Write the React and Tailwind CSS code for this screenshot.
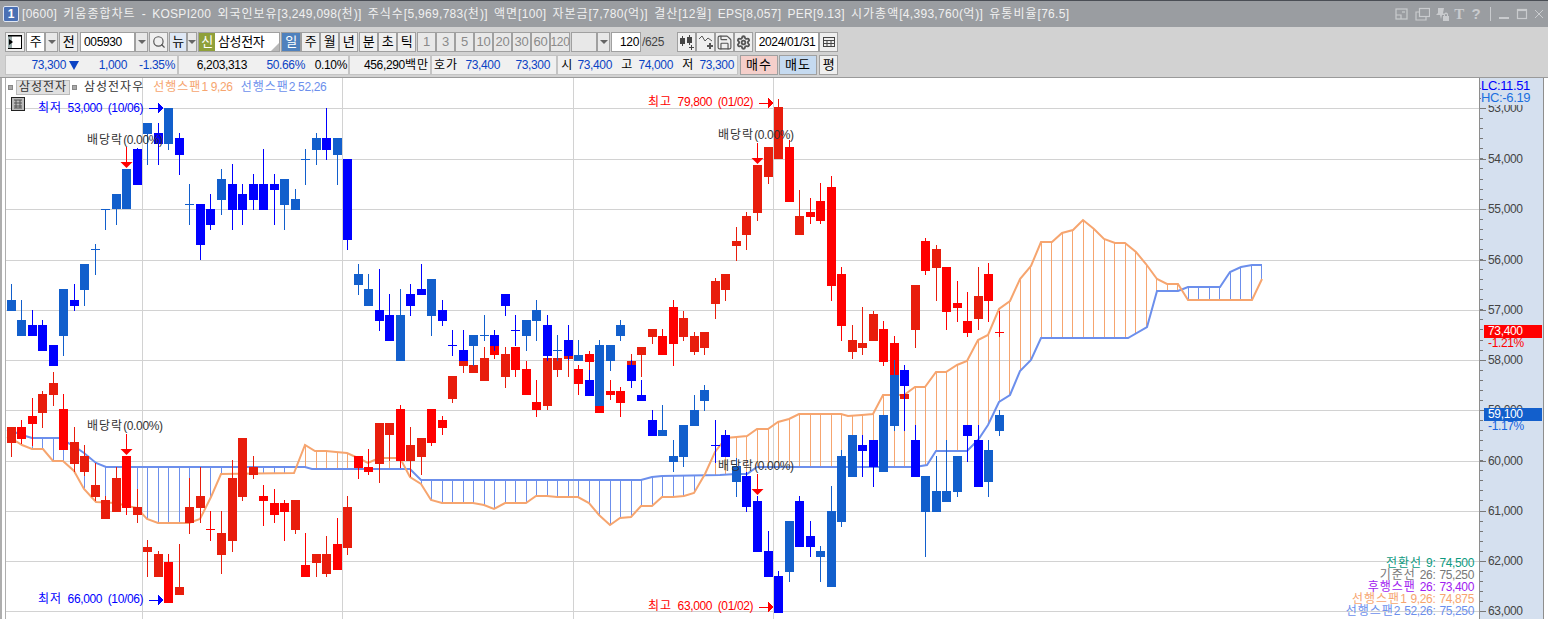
import { Save, Search, Settings } from "lucide-react";

const R1 = "#e81d0c";
const R2 = "#ff0000";
const B1 = "#125fcc";
const B2 = "#0000ff";
const ORANGE = "#f6a56f";
const SKY = "#6c8fec";

// [wick top, body top, body bottom, wick bottom, colour]
const blue = [
  [284, 300, 311, 311, B1], [300, 320, 336, 336, B1], [310, 325, 336, 336, B2], [320, 325, 351, 351, B2],
  [345, 345, 366, 366, B2], [289, 289, 336, 356, B1], [284, 300, 306, 311, B2], [264, 264, 290, 306, B1],
  [244, 249, 250, 275, B1], [209, 209, 210, 230, B1], [194, 194, 209, 225, B1], [169, 169, 209, 209, B1],
  [148, 149, 185, 185, B2], [123, 123, 134, 165, B1], [123, 133, 144, 165, B2], [108, 108, 144, 150, B1],
  [133, 138, 155, 175, B2], [184, 204, 205, 225, B1], [204, 204, 245, 260, B2], [194, 209, 225, 230, B2],
  [169, 179, 200, 215, B1], [164, 184, 210, 230, B2], [184, 194, 210, 225, B2], [174, 184, 200, 210, B2],
  [149, 184, 210, 210, B2], [174, 184, 190, 225, B2], [179, 179, 205, 230, B1], [189, 199, 210, 210, B1],
  [149, 159, 160, 185, B1], [133, 138, 150, 165, B1], [108, 138, 150, 160, B2], [138, 138, 155, 185, B1],
  [159, 159, 240, 250, B2], [264, 274, 285, 295, B1], [274, 289, 306, 306, B1], [269, 310, 321, 331, B2],
  [294, 315, 341, 341, B2], [289, 315, 361, 361, B1], [284, 294, 306, 316, B2], [264, 289, 295, 295, B2],
  [279, 279, 316, 336, B1], [300, 310, 321, 326, B2], [330, 345, 346, 356, B2], [330, 350, 361, 361, B2],
  [335, 335, 346, 366, B1], [315, 335, 336, 341, B1], [330, 335, 346, 351, B2], [294, 294, 306, 316, B2],
  [315, 330, 331, 346, B2], [320, 320, 336, 351, B1], [300, 310, 321, 341, B1], [315, 325, 356, 361, B2],
  [335, 350, 351, 361, B1], [325, 340, 356, 360, B2], [340, 355, 361, 361, B1], [370, 380, 396, 396, B2],
  [340, 345, 406, 406, B1], [345, 345, 361, 371, B1], [320, 325, 336, 341, B1], [360, 365, 381, 388, B2],
  [380, 395, 401, 401, B2], [410, 420, 436, 436, B2], [405, 430, 436, 436, B1], [440, 456, 462, 472, B1],
  [425, 425, 457, 467, B1], [395, 410, 426, 426, B1], [385, 390, 401, 411, B1], [420, 445, 446, 463, B2],
  [430, 435, 457, 457, B2], [458, 466, 482, 497, B1], [472, 476, 507, 512, B2], [496, 501, 552, 552, B2],
  [531, 551, 577, 577, B2], [571, 576, 613, 613, B2], [521, 521, 572, 582, B1], [496, 501, 547, 547, B2],
  [521, 536, 547, 557, B2], [546, 551, 557, 582, B1], [486, 511, 587, 587, B1], [450, 456, 522, 527, B1],
  [435, 435, 477, 477, B1], [435, 445, 451, 477, B2], [440, 440, 467, 487, B2], [415, 415, 472, 472, B1],
  [360, 375, 426, 431, B1], [365, 370, 386, 431, B2], [425, 440, 477, 477, B2], [476, 476, 512, 557, B1],
  [456, 491, 512, 512, B1], [440, 491, 502, 502, B1], [456, 456, 492, 497, B1], [425, 425, 436, 462, B2],
  [425, 440, 487, 487, B2], [440, 450, 482, 497, B1], [410, 415, 431, 436, B1],
];

const red = [
  [427, 427, 443, 457, R1], [420, 427, 439, 444, R2], [398, 416, 424, 446, R2], [391, 394, 413, 428, R1],
  [372, 383, 395, 406, R1], [394, 409, 450, 450, R2], [427, 442, 464, 472, R1], [445, 456, 472, 476, R1],
  [463, 485, 497, 501, R1], [496, 500, 519, 519, R1], [467, 478, 512, 512, R1], [456, 456, 508, 515, R2],
  [489, 507, 515, 523, R1], [540, 547, 552, 577, R1], [551, 554, 577, 577, R1], [554, 562, 603, 603, R2],
  [544, 587, 595, 595, R1], [478, 507, 523, 534, R1], [467, 496, 508, 523, R1], [511, 529, 530, 541, R2],
  [511, 533, 555, 574, R1], [460, 478, 541, 552, R1], [438, 438, 497, 501, R1], [456, 467, 475, 479, R1],
  [485, 496, 501, 526, R2], [489, 503, 515, 523, R2], [500, 503, 512, 541, R2], [500, 500, 530, 534, R1],
  [533, 565, 577, 577, R2], [554, 554, 563, 577, R1], [536, 554, 574, 577, R1], [518, 544, 570, 570, R2],
  [496, 507, 548, 555, R1], [456, 456, 468, 479, R2], [449, 467, 472, 475, R2], [423, 423, 464, 483, R1],
  [423, 423, 435, 461, R1], [405, 409, 461, 468, R2], [427, 445, 461, 477, R1], [438, 438, 457, 475, R1],
  [409, 409, 443, 446, R2], [416, 420, 428, 435, R2], [376, 376, 399, 403, R1], [361, 361, 366, 373, R1],
  [365, 365, 373, 373, R1], [347, 358, 381, 381, R1], [346, 346, 355, 359, R2], [347, 354, 377, 388, R1],
  [347, 347, 370, 377, R2], [361, 369, 395, 395, R2], [380, 402, 410, 417, R2], [358, 358, 406, 410, R1],
  [358, 358, 370, 377, R1], [356, 356, 359, 377, R1], [365, 369, 384, 395, R2], [351, 354, 362, 370, R2],
  [406, 406, 413, 413, R2], [380, 391, 395, 400, R2], [387, 391, 403, 417, R2], [354, 361, 365, 365, R1],
  [347, 347, 355, 377, R1], [329, 329, 337, 344, R1], [329, 336, 355, 355, R2], [300, 307, 344, 366, R2],
  [311, 318, 337, 341, R1], [332, 336, 352, 355, R1], [332, 332, 348, 355, R1], [278, 281, 304, 319, R1],
  [274, 274, 290, 301, R1], [227, 241, 246, 261, R1], [212, 216, 235, 250, R1], [165, 165, 213, 221, R1],
  [147, 147, 177, 184, R1], [99, 107, 159, 159, R1], [140, 147, 202, 202, R2], [190, 216, 235, 235, R1],
  [198, 212, 217, 224, R2], [183, 201, 221, 224, R2], [176, 187, 286, 301, R2], [267, 274, 326, 341, R2],
  [325, 340, 352, 359, R1], [307, 343, 348, 355, R1], [311, 314, 341, 341, R1], [321, 329, 362, 366, R2],
  [336, 343, 375, 375, R2], [394, 394, 399, 431, R1], [285, 285, 330, 348, R1], [238, 241, 271, 275, R2],
  [245, 249, 268, 301, R1], [267, 267, 312, 330, R2], [281, 303, 308, 322, R2], [292, 321, 333, 337, R2],
  [267, 296, 319, 330, R1], [263, 274, 301, 322, R2], [311, 332, 333, 337, R2],
];

const spanA = [
  [7, 437], [17, 442], [22, 445], [32, 449], [43, 449], [53, 461], [63, 461], [74, 471], [84, 489], [96, 502], [116, 503],
  [127, 506], [137, 508], [147, 519], [158, 523], [189, 523], [200, 519], [211, 497], [221, 474], [294, 473], [305, 445],
  [315, 451], [326, 451], [336, 452], [347, 453], [358, 458], [368, 463], [379, 458], [400, 458], [410, 477], [421, 484],
  [431, 500], [442, 503], [473, 503], [484, 505], [494, 509], [505, 503], [526, 503], [536, 496], [547, 496], [557, 497],
  [578, 497], [589, 503], [599, 515], [610, 525], [620, 518], [631, 517], [641, 506], [652, 506], [662, 497], [673, 497],
  [684, 496], [694, 493], [705, 474], [715, 452], [726, 438], [747, 436], [757, 429], [768, 429], [778, 422], [789, 419],
  [799, 414], [841, 414], [848, 416], [862, 415], [873, 414], [883, 395], [904, 395], [915, 387], [925, 387], [936, 372],
  [946, 372], [957, 365], [967, 361], [978, 340], [988, 335], [999, 309], [1010, 301], [1020, 279], [1031, 266], [1041, 242],
  [1052, 242], [1062, 233], [1073, 230], [1083, 220], [1094, 229], [1104, 239], [1115, 243], [1125, 243], [1136, 252],
  [1146, 264], [1157, 279], [1167, 284], [1178, 284], [1188, 300], [1252, 300], [1262, 279],
];

const spanB = [
  [7, 430], [17, 433], [22, 435], [32, 438], [63, 438], [68, 443], [74, 446], [84, 453], [96, 463], [106, 467], [305, 467],
  [312, 469], [410, 469], [421, 480], [641, 480], [652, 477], [662, 476], [720, 475], [736, 474], [747, 474], [757, 467],
  [915, 467], [927, 465], [936, 451], [967, 451], [978, 440], [988, 425], [999, 402], [1010, 395], [1020, 371], [1031, 360],
  [1041, 338], [1128, 338], [1147, 327], [1157, 291], [1178, 291], [1188, 287], [1220, 287], [1230, 272], [1241, 267],
  [1252, 265], [1262, 265],
];

const gridY = [108, 159, 209, 260, 310, 360, 410, 461, 511, 561, 611];
const gridX = [142, 342, 573, 773];
const prices = ["53,000", "54,000", "55,000", "56,000", "57,000", "58,000", "59,000", "60,000", "61,000", "62,000", "63,000"];

const xAt = (i) => Math.floor(11.3 + 10.51 * i);
const pts = (line) => line.map((p) => p.join(",")).join(" ");

// hangul runs sit 1px wider than the font gives, like the terminal's bitmap font
function K({ children }) {
  return children.split(/([가-힣]+)/).map((part, i) =>
    i % 2 ? (
      <span key={i} className="tracking-[1px]">{part}</span>
    ) : (
      part
    )
  );
}

function interp(line, x) {
  for (let k = 0; k < line.length - 1; k++) {
    const [x0, y0] = line[k];
    const [x1, y1] = line[k + 1];
    if (x >= x0 && x <= x1) return y0 + ((y1 - y0) * (x - x0)) / (x1 - x0);
  }
  return null;
}

function Hatch() {
  const lines = [];
  for (let i = 0; i < 120; i++) {
    const x = xAt(i);
    const a = interp(spanA, x);
    const b = interp(spanB, x);
    if (a == null || b == null) continue;
    lines.push(<rect key={i} x={x} y={Math.min(a, b)} width="1" height={Math.abs(a - b)} fill={a < b ? ORANGE : SKY} />);
  }
  return <g shapeRendering="crispEdges">{lines}</g>;
}

function Candles({ data }) {
  return (
    <g shapeRendering="crispEdges">
      {data.map(([top, bt, bb, bot, c], i) => (
        <g key={i} fill={c}>
          <rect x={xAt(i)} y={top} width="1" height={bot - top} />
          <rect x={xAt(i) - 4} y={bt} width="9" height={bb - bt} />
        </g>
      ))}
    </g>
  );
}

function ChartText({ x, y, fill = "#333", children }) {
  return (
    <text x={x} y={y} fill={fill} fontSize="12" dominantBaseline="central">
      {children.split(/([가-힣]+)/).map((part, i) =>
        i % 2 ? (
          <tspan key={i} letterSpacing="1">{part}</tspan>
        ) : (
          part
        )
      )}
    </text>
  );
}

function ArrowRight({ x, y, fill }) {
  return (
    <g fill={fill} shapeRendering="crispEdges">
      <rect x={x} y={y - 0.5} width="10" height="1" />
      <polygon points={`${x + 9},${y - 5} ${x + 15},${y} ${x + 9},${y + 5}`} />
    </g>
  );
}

function ArrowDown({ x, y }) {
  return (
    <g fill={R2}>
      <rect x={x} y={y} width="1" height="15" shapeRendering="crispEdges" />
      <polygon points={`${x - 5.5},${y + 15} ${x + 6.5},${y + 15} ${x + 0.5},${y + 21}`} />
    </g>
  );
}

function Chart() {
  return (
    <svg className="block w-[1473px] h-[541px]" viewBox="6 78 1473 541">
      <g fill="#d2d2d2" shapeRendering="crispEdges">
        {gridY.map((y) => (
          <rect key={y} x="6" y={y} width="1473" height="1" />
        ))}
        {gridX.map((x) => (
          <rect key={x} x={x} y="78" width="1" height="541" />
        ))}
      </g>
      <Hatch />
      <polyline points={pts(spanB)} fill="none" stroke={SKY} strokeWidth="2" />
      <polyline points={pts(spanA)} fill="none" stroke={ORANGE} strokeWidth="2" />
      <Candles data={red} />
      <Candles data={blue} />

      <ChartText x="38" y="108" fill="#0000ff">최저 53,000 (10/06)</ChartText>
      <ArrowRight x={149} y={108} fill="#0000ff" />
      <ChartText x="87" y="140">배당락(0.00%)</ChartText>
      <ArrowDown x={126} y={147} />
      <ChartText x="87" y="426">배당락(0.00%)</ChartText>
      <ArrowDown x={126} y={434} />
      <ChartText x="38" y="599" fill="#0000ff">최저 66,000 (10/06)</ChartText>
      <ArrowRight x={149} y={600} fill="#0000ff" />
      <ChartText x="648" y="102" fill="#ff0000">최고 79,800 (01/02)</ChartText>
      <ArrowRight x={759} y={103} fill="#ff0000" />
      <ChartText x="718" y="135">배당락(0.00%)</ChartText>
      <ArrowDown x={757} y={143} />
      <ChartText x="718" y="466">배당락(0.00%)</ChartText>
      <ArrowDown x={757} y={474} />
      <ChartText x="648" y="606" fill="#ff0000">최고 63,000 (01/02)</ChartText>
      <ArrowRight x={759} y={607} fill="#ff0000" />
    </svg>
  );
}

function AxisTicks() {
  const ticks = [];
  for (let y = 88; y < 619; y += 10.06) ticks.push(Math.round(y));
  return (
    <svg className="absolute left-0 top-0 w-[64px] h-[541px]" viewBox="1480 78 64 541">
      <g fill="#777" shapeRendering="crispEdges">
        {ticks.map((y) => (
          <rect key={y} x="1480" y={y} width="3" height="1" />
        ))}
        {gridY.map((y) => (
          <rect key={y} x="1480" y={y} width="6" height="1" />
        ))}
      </g>
      {prices.map((p, i) => (
        <text key={p} x="1488" y={gridY[i]} fill="#444" fontSize="12" dominantBaseline="central">
          {p}
        </text>
      ))}
      <rect x="1484" y="325" width="58" height="13" fill="#ff0000" />
      <text x="1488" y="331" fill="#fff" fontSize="12" dominantBaseline="central">73,400</text>
      <text x="1488" y="343" fill="#ff0000" fontSize="12" dominantBaseline="central">-1.21%</text>
      <rect x="1484" y="408" width="58" height="13" fill="#125fcc" />
      <text x="1488" y="414" fill="#fff" fontSize="12" dominantBaseline="central">59,100</text>
      <text x="1488" y="426" fill="#1565e0" fontSize="12" dominantBaseline="central">-1.17%</text>
    </svg>
  );
}

function Btn({ w, active, off, children }) {
  const tone = active
    ? "bg-[#4f81bd] text-white"
    : off
      ? "bg-[#e8e8e8] text-[#8a8a8a]"
      : "bg-[#efefef] text-black";
  return (
    <div className={`${w} ${tone} h-[20px] shrink-0 border border-[#a0a0a0] flex items-center justify-center`}>
      {children}
    </div>
  );
}

function Caret({ w, tone = "bg-[#e8e8e8]" }) {
  return (
    <div className={`${w} ${tone} h-[20px] shrink-0 border border-[#a0a0a0] flex items-center justify-center`}>
      <div className="w-0 h-0 border-x-[4px] border-x-transparent border-t-[4px] border-t-[#666]" />
    </div>
  );
}

function TitleIcons() {
  return (
    <div className="flex items-center ml-auto pr-[4px] text-[#c9cbce]">
      <svg className="w-[14px] h-[14px] mr-[6px]" viewBox="0 0 14 14" fill="none" stroke="currentColor" strokeWidth="1.2">
        <rect x="1" y="2" width="11" height="10" />
        <path d="M1 8h5v4" />
        <path d="M7 5h3" />
      </svg>
      <svg className="w-[15px] h-[14px] mr-[5px]" viewBox="0 0 15 14" fill="none" stroke="currentColor" strokeWidth="1.2">
        <rect x="4.5" y="1.5" width="10" height="8" />
        <path d="M4 5H1v8h10v-3" />
      </svg>
      <svg className="w-[14px] h-[15px] mr-[4px]" viewBox="0 0 14 15" fill="currentColor">
        <path d="M3 1h6l-1 5 2 2H7l-1 4-1-4H1l2-2z" />
        <rect x="8" y="9" width="6" height="5" />
        <path d="M9 9V7.5a2 2 0 0 1 4 0V9h-1V8a1 1 0 0 0-2 0v1z" />
      </svg>
      <span className="text-[15px] font-bold font-['Liberation_Serif',serif] w-[12px] mr-[5px] text-center">T</span>
      <span className="text-[15px] font-bold w-[12px] mr-[8px] text-center">?</span>
      <div className="w-px h-[14px] bg-[#c9cbce] mr-[7px]" />
      <svg className="w-[12px] h-[12px] mr-[6px]" viewBox="0 0 12 12" fill="currentColor">
        <rect x="1" y="9" width="10" height="2" />
      </svg>
      <svg className="w-[12px] h-[12px] mr-[6px]" viewBox="0 0 12 12" fill="none" stroke="currentColor" strokeWidth="1.2">
        <rect x="1.5" y="1.5" width="9" height="9" />
        <path d="M1 2.5h10" />
      </svg>
      <svg className="w-[10px] h-[10px]" viewBox="0 0 10 10" fill="none" stroke="currentColor" strokeWidth="1">
        <path d="M1 1l8 8M9 1l-8 8" />
      </svg>
    </div>
  );
}

function ToolRow() {
  return (
    <div className="flex items-center h-[20px] pl-[5px] text-[13px] text-black">
      <Btn w="w-[20px]">
        <svg className="w-[14px] h-[14px]" viewBox="0 0 14 14">
          <rect x="0.5" y="0.5" width="13" height="13" fill="#fff" stroke="#000" />
          <path d="M0 1h4v12H0z" fill="#9aa" />
          <path d="M0 1h14" stroke="#000" />
          <path d="M1 4l4 3-4 3z" fill="#000" />
        </svg>
      </Btn>
      <div className="w-[1px]" />
      <Btn w="w-[19px] !bg-white">주</Btn>
      <Caret w="w-[13px]" />
      <div className="w-[1px]" />
      <Btn w="w-[19px]">전</Btn>
      <div className="w-[2px]" />
      <div className="w-[55px] h-[20px] shrink-0 bg-white border border-[#a0a0a0] pl-[3px] flex items-center text-[12px]">005930</div>
      <Caret w="w-[13px]" />
      <div className="w-[1px]" />
      <Btn w="w-[19px]">
        <Search size={14} strokeWidth={2} className="text-[#555]" />
      </Btn>
      <div className="w-[1px]" />
      <Btn w="w-[18px] !bg-[#dfe8f5]">뉴</Btn>
      <Caret w="w-[10px]" />
      <div className="w-[1px]" />
      <div className="relative w-[82px] h-[20px] shrink-0 bg-white border border-[#a0a0a0] flex items-center">
        <div className="w-[16px] h-[18px] bg-[#8fa03a] text-white flex items-center justify-center">신</div>
        <span className="ml-[3px]">삼성전자</span>
        <div className="absolute right-0 bottom-0 w-0 h-0 border-l-[8px] border-l-transparent border-b-[8px] border-b-[#b8b8b8]" />
      </div>
      <div className="w-[1px]" />
      <Btn w="w-[20px]" active>일</Btn>
      <Btn w="w-[19px]">주</Btn>
      <Btn w="w-[19px]">월</Btn>
      <Btn w="w-[19px]">년</Btn>
      <div className="w-[1px]" />
      <Btn w="w-[19px]">분</Btn>
      <Btn w="w-[19px]">초</Btn>
      <Btn w="w-[19px]">틱</Btn>
      <div className="w-[1px]" />
      <Btn w="w-[19px]" off>1</Btn>
      <Btn w="w-[19px]" off>3</Btn>
      <Btn w="w-[19px]" off>5</Btn>
      <Btn w="w-[19px]" off>10</Btn>
      <Btn w="w-[19px]" off>20</Btn>
      <Btn w="w-[19px]" off>30</Btn>
      <Btn w="w-[19px]" off>60</Btn>
      <Btn w="w-[20px] text-[12px]" off>120</Btn>
      <div className="w-[1px]" />
      <div className="w-[26px] h-[20px] shrink-0 bg-[#e8e8e8] border border-[#a0a0a0]" />
      <Caret w="w-[13px]" tone="bg-[#e8e8e8]" />
      <div className="w-[1px]" />
      <div className="w-[30px] h-[20px] shrink-0 bg-white border border-[#a0a0a0] pr-[1px] flex items-center justify-end text-[12px]">120</div>
      <span className="w-[36px] pl-[1px] text-[#444] text-[12px]">/625</span>
      <Btn w="w-[19px]">
        <svg className="w-[16px] h-[16px]" viewBox="0 0 16 16" fill="#444">
          <rect x="1" y="4" width="5" height="6" />
          <rect x="3" y="2" width="1" height="10" />
          <rect x="8" y="3" width="5" height="6" />
          <rect x="10" y="1" width="1" height="10" />
          <path d="M10 13h2v-2h1v2h2v1h-2v2h-1v-2h-2z" />
        </svg>
      </Btn>
      <Btn w="w-[19px]">
        <svg className="w-[16px] h-[16px]" viewBox="0 0 16 16" fill="none" stroke="#555">
          <path d="M1 5l3-3 3 5 3-3 4 3" />
          <path d="M9 12h6M12 9v6" strokeWidth="2" />
        </svg>
      </Btn>
      <Btn w="w-[19px]">
        <Save size={17} strokeWidth={1.6} className="text-[#555]" />
      </Btn>
      <Btn w="w-[19px]">
        <Settings size={15} strokeWidth={3} className="text-[#555]" />
      </Btn>
      <div className="w-[2px]" />
      <div className="w-[64px] h-[20px] shrink-0 bg-white border border-[#a0a0a0] flex items-center justify-center text-[12px]">2024/01/31</div>
      <Btn w="w-[19px]">
        <svg className="w-[14px] h-[14px]" viewBox="0 0 14 14" fill="none" stroke="#444">
          <rect x="1.5" y="2.5" width="11" height="9" />
          <path d="M1 5.5h12M1 8.5h12M5 5v7M9 5v7" />
        </svg>
      </Btn>
    </div>
  );
}

function QuoteRow() {
  const cell = "h-[20px] shrink-0 bg-[#f0f0f0] border border-[#c4c4c4] flex items-center";
  return (
    <div className="flex items-center h-[20px] pl-[5px] mt-[3px] text-[12px] text-black">
      <div className={`${cell} w-[173px] text-[#0b43c4]`}>
        <span className="w-[60px] text-right">73,300</span>
        <div className="ml-[3px] w-0 h-0 border-x-[5px] border-x-transparent border-t-[9px] border-t-[#0b43c4]" />
        <span className="w-[48px] text-right">1,000</span>
        <span className="w-[48px] text-right">-1.35%</span>
      </div>
      <div className={`${cell} w-[171px]`}>
        <span className="w-[68px] text-right">6,203,313</span>
        <span className="w-[58px] text-right text-[#0b43c4]">50.66%</span>
        <span className="w-[42px] text-right">0.10%</span>
      </div>
      <div className={`${cell} w-[82px] justify-end pr-[1px]`}><span><K>456,290백만</K></span></div>
      <div className={`${cell} w-[126px]`}>
        <span className="w-[26px] text-right"><K>호가</K></span>
        <span className="w-[42px] text-right text-[#0b43c4]">73,400</span>
        <span className="w-[50px] text-right text-[#0b43c4]">73,300</span>
      </div>
      <div className={`${cell} w-[181px]`}>
        <span className="w-[14px] text-right">시</span>
        <span className="w-[40px] text-right text-[#0b43c4]">73,400</span>
        <span className="w-[20px] text-right">고</span>
        <span className="w-[41px] text-right text-[#0b43c4]">74,000</span>
        <span className="w-[20px] text-right">저</span>
        <span className="w-[41px] text-right text-[#0b43c4]">73,300</span>
      </div>
      <div className="w-[2px]" />
      <div className="w-[38px] h-[20px] shrink-0 bg-[#f5cfca] border border-[#a0a0a0] flex items-center justify-center text-[13px] tracking-[1px]">매수</div>
      <div className="w-[1px]" />
      <div className="w-[38px] h-[20px] shrink-0 bg-[#c5daf0] border border-[#a0a0a0] flex items-center justify-center text-[13px] tracking-[1px]">매도</div>
      <div className="w-[2px]" />
      <div className="w-[19px] h-[20px] shrink-0 bg-[#efefef] border border-[#a0a0a0] flex items-center justify-center text-[13px]">평</div>
    </div>
  );
}

export default function App() {
  return (
    <div className="w-[1548px] h-[619px] overflow-hidden flex flex-col bg-[#d2d2d2] tracking-[-0.35px] [word-spacing:2.5px] font-['Liberation_Sans','Noto_Sans_CJK_KR',sans-serif]">
      {/* title bar */}
      <div className="h-[27px] shrink-0 border-t-[1px] border-t-[#4a4e55] bg-[#9a9da1] flex items-center pl-[3px] text-[12px] text-[#f0f0f0]">
        <div className="w-[16px] h-[16px] bg-[#4a70b4] border border-[#dfe6f2] rounded-[2px] text-white font-bold text-[12px] leading-none flex items-center justify-center mr-[3px]">1</div>
        <span className="whitespace-pre tracking-[0.3px]">
          <K>[0600] 키움종합차트 - KOSPI200 외국인보유[3,249,098(천)] 주식수[5,969,783(천)] 액면[100] 자본금[7,780(억)] 결산[12월] EPS[8,057] PER[9.13] 시가총액[4,393,760(억)] 유통비율[76.5]</K>
        </span>
        <TitleIcons />
      </div>

      {/* toolbars */}
      <div className="h-[50px] shrink-0 pt-[5px]">
        <ToolRow />
        <QuoteRow />
      </div>

      {/* chart */}
      <div className="flex-1 flex bg-white border-t border-t-[#9a9a9a]">
        <div className="w-[6px] shrink-0 bg-white border-l-[2px] border-l-[#aeaeae] border-r border-r-[#aeaeae]" />
        <div className="relative w-[1473px] shrink-0">
          <Chart />
          {/* series legend */}
          <div className="absolute left-[2px] top-[1px] flex items-center h-[16px] text-[12px] text-[#333] [word-spacing:0px]">
            <div className="w-[5px] h-[5px] bg-[#aaa] border border-[#888]" />
            <div className="ml-[3px] w-[54px] h-[15px] bg-[#e0e0e0] border border-[#bbb] flex items-center justify-center"><span><K>삼성전자</K></span></div>
            <div className="ml-[2px] w-[5px] h-[5px] bg-[#aaa] border border-[#888]" />
            <span className="ml-[7px]"><K>삼성전자우</K></span>
            <span className="ml-[9px] text-[#f6a56f]"><K>선행스팬1 9,26</K></span>
            <span className="ml-[8px] text-[#6c8fec]"><K>선행스팬2 52,26</K></span>
          </div>
          <svg className="absolute left-[5px] top-[19px] w-[14px] h-[14px]" viewBox="0 0 14 14" fill="#bbb" stroke="#222">
            <rect x="0.5" y="0.5" width="13" height="13" />
            <path d="M3 3h8M3 6h8M3 9h8M3 11h8M5 3v8M9 3v8" fill="none" stroke="#555" />
          </svg>
          {/* indicator values */}
          <div className="absolute right-[5px] bottom-[2px] flex flex-col items-end text-[12px] leading-[12px] [word-spacing:1px]">
            <span className="text-[#0d9a7f]"><K>전환선 9: 74,500</K></span>
            <span className="text-[#777]"><K>기준선 26: 75,250</K></span>
            <span className="text-[#a020f0]"><K>후행스팬 26: 73,400</K></span>
            <span className="text-[#f6a56f]"><K>선행스팬1 9,26: 74,875</K></span>
            <span className="text-[#6c8fec]"><K>선행스팬2 52,26: 75,250</K></span>
          </div>
        </div>
        <div className="relative w-[65px] shrink-0 bg-[#d5e0ef] border-x border-x-[#8e8e8e]">
          <AxisTicks />
          <div className="absolute left-[1px] top-[2px] h-[25px] w-[60px] bg-[#d5e0ef] flex flex-col text-[13px] leading-[12px]">
            <span className="text-[#0000ff]">LC:11.51</span>
            <span className="text-[#1a6fe0]">HC:-6.19</span>
          </div>
        </div>
      </div>
    </div>
  );
}
